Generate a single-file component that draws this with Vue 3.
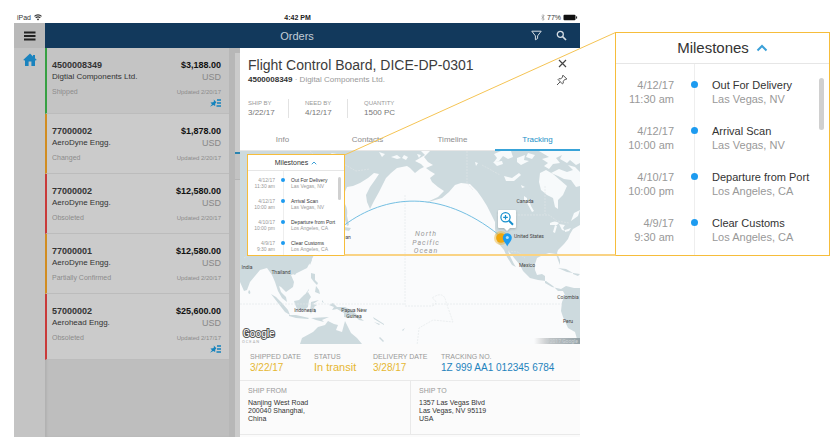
<script setup>
const orders = [
  { id: '4500008349', vendor: 'Digtial Components Ltd.', price: '$3,188.00', status: 'Shipped', updated: '2/20/17', tone: 'green', pinned: true, current: true },
  { id: '77000002', vendor: 'AeroDyne Engg.', price: '$1,878.00', status: 'Changed', updated: '2/20/17', tone: 'amber' },
  { id: '77000002', vendor: 'AeroDyne Engg.', price: '$12,580.00', status: 'Obsoleted', updated: '2/20/17', tone: 'red' },
  { id: '77000001', vendor: 'AeroDyne Engg.', price: '$12,580.00', status: 'Partially Confirmed', updated: '2/20/17', tone: 'amber' },
  { id: '57000002', vendor: 'Aerohead Engg.', price: '$25,600.00', status: 'Obsoleted', updated: '2/17/17', tone: 'red', pinned: true },
]
const facts = [
  { label: 'SHIP BY', value: '3/22/17' },
  { label: 'NEED BY', value: '4/12/17' },
  { label: 'QUANTITY', value: '1500 PC' },
]
const tabs = ['Info', 'Contacts', 'Timeline', 'Tracking']
const milestones = [
  { date: '4/12/17', time: '11:30 am', name: 'Out For Delivery', place: 'Las Vegas, NV' },
  { date: '4/12/17', time: '10:00 am', name: 'Arrival Scan', place: 'Las Vegas, NV' },
  { date: '4/10/17', time: '10:00 pm', name: 'Departure from Port', place: 'Los Angeles, CA' },
  { date: '4/9/17', time: '9:30 am', name: 'Clear Customs', place: 'Los Angeles, CA' },
]
</script>

<template>
  <main class="page">
    <section class="device">
      <div class="statusbar">
        <span class="carrier">iPad
          <svg width="8" height="7" viewBox="0 0 8 7"><path d="M4 6.6 2.8 5.2a1.7 1.7 0 0 1 2.4 0z" fill="#333" /><path d="M.5 2.4a5 5 0 0 1 7 0M1.7 3.9a3.3 3.3 0 0 1 4.6 0" fill="none" stroke="#333" stroke-width="1.2" /></svg>
        </span>
        <b>4:42 PM</b>
        <span class="power">
          <svg width="4" height="7" viewBox="0 0 4 7"><path d="M.4 2 3.3 4.9 2 6.4V.6L3.3 2 .4 4.9" fill="none" stroke="#888" stroke-width=".6" /></svg>
          77%
          <svg width="15" height="7" viewBox="0 0 15 7"><rect x=".5" y=".8" width="12" height="5.4" rx="1" fill="#111" /><path d="M13.6 2.4v2.2" stroke="#111" stroke-width="1" /></svg>
        </span>
      </div>

      <header class="topbar">
        <button class="menu" aria-label="Menu">
          <svg width="12" height="10" viewBox="0 0 12 10"><path d="M0 1.5h11.5M0 5h11.5M0 8.5h11.5" stroke="#222" stroke-width="1.8" /></svg>
        </button>
        <h1>Orders</h1>
        <div class="tools">
          <button aria-label="Filter"><svg width="11" height="11" viewBox="0 0 11 11"><path d="M.8 1.2h9.4L6.6 5.9v2.6L4.4 9.8V5.9z" fill="none" stroke="#d5dde4" stroke-width="1" stroke-linejoin="round" /></svg></button>
          <button aria-label="Search"><svg width="11" height="11" viewBox="0 0 11 11"><circle cx="4.300" cy="4.300" r="3" fill="none" stroke="#d5dde4" stroke-width="1.3" /><path d="m6.500 6.500 3.500 3.500" stroke="#d5dde4" stroke-width="1.7" /></svg></button>
        </div>
      </header>

      <div class="body">
        <nav class="rail">
          <a href="#home" aria-label="Home">
            <svg width="14" height="14" viewBox="0 0 14 14"><path d="M7 .6 10 3.400V2h2v3.300l1.600 1.500-.8.9-.8-.7v6H8.400V8.600H5.600V13H2V7l-.8.7-.8-.9z" fill="#1a83be" /></svg>
          </a>
        </nav>

        <ul class="orders">
          <li v-for="(o, i) in orders" :key="i" :class="['order', o.tone, { current: o.current }]">
            <div class="left">
              <strong>{{ o.id }}</strong>
              <span class="vendor">{{ o.vendor }}</span>
              <span class="state">{{ o.status }}</span>
            </div>
            <div class="right">
              <b>{{ o.price }}</b>
              <span class="currency">USD</span>
              <span class="updated">Updated {{ o.updated }}</span>
              <svg v-if="o.pinned" width="11" height="8" viewBox="0 0 11 8"><path d="M0 7.800 2 5.300.5 3.600 3.200 3.200 4 2.200 3.700.6 6.400 3.200 5.300 4.400 5.100 6.900 3.300 5.900z" fill="#1483bd" /><path d="M7 1H11M7 4H11M6.500 7H11" stroke="#1483bd" stroke-width="1.300" /></svg>
            </div>
          </li>
        </ul>

        <div class="gutter"></div>
        <div class="peek"><i></i></div>

        <article class="detail">
          <div class="heading">
            <div>
              <h2>Flight Control Board, DICE-DP-0301</h2>
              <p class="sub"><b>4500008349</b> · Digital Components Ltd.</p>
              <dl class="facts">
                <div v-for="f in facts" :key="f.label"><dt>{{ f.label }}</dt><dd>{{ f.value }}</dd></div>
              </dl>
            </div>
            <div class="actions">
              <button aria-label="Close"><svg width="9" height="9" viewBox="0 0 9 9"><path d="m1 1 7 7M8 1 1 8" stroke="#444" stroke-width="1.200" /></svg></button>
              <button aria-label="Pin"><svg width="12" height="12" viewBox="0 0 12 12"><path d="M7 1.200 10.800 5 9.800 5.500 9 5.200 7.300 7.300 7.200 9.300 6.400 9.900 2.100 5.600 2.800 4.800 4.800 4.700 6.800 3 6.400 2zM4.200 7.800 1 11" fill="none" stroke="#555" stroke-width="1" stroke-linejoin="round" /></svg></button>
            </div>
          </div>

          <div class="tabs" role="tablist">
            <button v-for="t in tabs" :key="t" role="tab" :aria-selected="t === 'Tracking'" :class="{ active: t === 'Tracking' }">{{ t }}</button>
          </div>

          <div class="map">
            <svg class="world" viewBox="240 151 340 193" preserveAspectRatio="xMinYMid slice">
              <defs>
                <linearGradient id="credit" x1="0" x2="1"><stop offset="0" stop-color="#aaa" stop-opacity="0" /><stop offset=".35" stop-color="#aab0b3" stop-opacity=".75" /><stop offset="1" stop-color="#93a1a7" /></linearGradient>
              </defs>
              <g class="land">
                <path d="M240 151H421L425 155 420 158 415 161 421 164 424 167 420 169 415 173 410 168 407 166 402 167 397 168 391 173 386 178 383 184 379 192 374 201 370 209 367 202 366 195 370 187 375 180 379 174 374 173 368 178 360 183 353 186 347 187 344 194 345 205 342 215 330 225 318 240 313 257 307 268 297 273 291 275 294 282 293 287 286 292 281 287 279 286 281 292 286 297 287 302 282 298 278 291 275 282 272 275 267 268 260 270 255 276 250 282 247 290 244 291 240 282z" />
                <path d="M345 204q3 5 2 12l2 9-2 1-2-6zM344 227l7 1-2 3-5-1z" />
                <path d="M249 290q2 1 1 4-3 0-1-4zM293 271l4 1-2 3-2-1zM311 258l1 2-2 5-1-2zM311 273l4 1 0 6 3 3-1 2-3-3-3-4zM316 286l3 4 1 4-5-2zM309 290l-4 5 1-2 3-4zM271 294l5 3 6 6 6 7 2 5-5-3-7-9zM289 315l7 0 13 3-1 1-12-1-7-2zM294 301l5-1 5-5 4-3 3 5-2 3-1 7-5 4-6-2-2-5zM311 302l8-2-6 4 4 1-3 2 2 6-2-1-1-5-2 7-1-3 1-7zM311 318l18-1-7 3 2 2-8-2zM322 300l2 3-2-1zM329 305l4-2 4 4 8 0 8 4 5 5 6 5-5-1-5-5-5 3-5-1 0-4-7-4-5 1 2-3zM361 308l4 3-4-2zM373 317l11 7 0 1-10-6z" />
                <path d="M300 344 302 338 313 332 318 327 325 325 328 321 334 324 338 325 336 330 342 332 345 321 348 327 351 333 357 338 362 344z" />
                <path d="M380 337l4 4-1 1-4-4zM402 330l3-2-2 3zM374 322l6 2-1 1z" />
                <path d="M424 157 430 151H580V225L573 229 570 234 568 239 564 244 558 250 557 253 560 260 560 265 558 260 556 254 549 253 543 255 537 258 535 264 535 270 537 275 542 274 545 276 545 283 552 287 561 289 566 286 574 288 580 288V344L577 339 575 332 568 328 563 317 561 311 562 302 565 295 563 291 558 291 553 286 546 281 538 280 530 278 523 271 520 265 515 259 511 254 508 251 511 258 514 264 516 267 512 265 507 257 504 250 498 243 496 238 495 228 495 222 491 214 487 206 482 198 477 191 470 184 461 183 455 185 449 192 442 198 425 203 438 197 444 191 438 187 432 182 430 178 435 174 430 171 426 168 433 165 428 162z" />
                <path d="M487 205l4 5 4 7-2-1zM485 196l3 5 0 3-3-4zM558 268l8 1 7 4-6-1zM573 273l7 1-2 2-5-2z" />
              </g>
              <g class="water">
                <path d="M540 173 546 170 553 174 560 180 567 186 563 195 558 200 558 209 555 207 553 198 547 195 541 190 539 182z" />
                <path d="M501 151l10 0 2 6-5 2-5-3-4 5-5 1 3-4-3-4zM493 162l9-1 1 3-6 2zM517 158l8-3-1 5 5 1-8 4-4-3zM504 176l8 2 7-5 2 2-7 6-8 0zM528 153l7 2-3 4-6-2zM539 151l41 0 0 12-4 2-6-5-3 3-7-4 2-4-6 3 4 5-7 1-4 5-5-3 4-3-6-4 7-2z" />
                <path d="M551 173l8-4 8 3 6-2-5-5 7 2 5 5 0 14-4 1-5-7-7-1-6-3zM529 200l2 6 3 5-2 1-5-9zM524 196l3 2 0 4-3-2zM521 185l4 2-3 1z" />
                <path d="M550 223q5-3 9 0l-2 2-7 0zM555 225l2 1-2 7-2-1zM559 224l6 1-2 3 2 3-3-1zM565 230l6-2-2 3-4 1zM574 213l6-3-2 6-7 5z" />
                <path d="M404 155l4 2-2 3-4-2zM417 154l4 1-2 3zM475 162l1 4 2-3zM331 153l12 2-3 4-6-1zM379 152l3 5 3-3zM391 157l6-2 4 3-4 1z" />
              </g>
              <path class="border" d="M467 151v32l6 7M497 215h52l8 6 12 2M508 251l10 1 7 6M310 151l8 8 22 3 16 9 14-2M244 258l14-9M405 195v111h27q8-3 0-8 12-8 14 4l7 20-20-2-14 8-2 18M240 304h165M432 304h130M545 186l0 28M482 165l18 10" />
              <path class="route" d="M344.500 225C385 195 440 188 499 235" />
              <g class="ocean"><text x="426" y="236">North</text><text x="426" y="245">Pacific</text><text x="426" y="253">Ocean</text></g>
              <g class="places">
                <text x="525" y="203">Canada</text><text x="529" y="238">United States</text><text x="527" y="267">Mexico</text><text x="568" y="299">Colombia</text><text x="568" y="323">Peru</text>
                <text x="247" y="269">India</text><text x="281" y="274">Thailand</text><text x="305" y="312">Indonesia</text><text x="354" y="312">Papua New</text><text x="354" y="318">Guinea</text><text x="344" y="239">Japan</text>
              </g>
              <circle cx="501" cy="238" r="7" fill="#efb229" opacity=".45" /><circle cx="501" cy="238" r="4.800" fill="#f0a70c" />
              <path d="M507.300 246.500c-1-3-4.500-5.500-4.500-8.800a4.500 4.500 0 0 1 9 0c0 3.300-3.500 5.800-4.500 8.800z" fill="#1b9cf0" /><circle cx="507.300" cy="237.600" r="1.500" fill="#b6dff5" />
              <path class="tip" d="M499 210h16q1 0 1 1v16q0 1-1 1h-5l-3 3-3-3h-5q-1 0-1-1v-16q0-1 1-1z" />
              <circle cx="505.500" cy="217.300" r="4.600" fill="#fff" stroke="#168fcd" stroke-width="1.200" /><path d="M505.500 215v4.600M503.200 217.300h4.600" stroke="#168fcd" stroke-width="1.200" /><path d="m509 220.700 4 4" stroke="#168fcd" stroke-width="2" />
              <text class="fragment" x="242" y="343">OCEAN</text>
              <text class="google" x="243" y="337">Google</text>
              <rect x="534" y="338" width="46" height="6" fill="url(#credit)" />
              <text class="copyright" x="578" y="343">©2017 Google</text>
            </svg>
            <section class="milestones small">
              <h3>Milestones <svg viewBox="0 0 12 8"><path d="m1.500 6.500 4.500-4.500 4.500 4.500" /></svg></h3>
              <ol>
                <li v-for="m in milestones" :key="m.name">
                  <span class="when">{{ m.date }}<br>{{ m.time }}</span><i class="dot"></i>
                  <span class="what"><b>{{ m.name }}</b><br>{{ m.place }}</span>
                </li>
              </ol>
              <i class="thumb"></i>
            </section>
          </div>

          <dl class="shipment">
            <div><dt>SHIPPED DATE</dt><dd>3/22/17</dd></div>
            <div><dt>STATUS</dt><dd class="transit">In transit</dd></div>
            <div><dt>DELIVERY DATE</dt><dd>3/28/17</dd></div>
            <div><dt>TRACKING NO.</dt><dd><a href="#tracking">1Z 999 AA1 012345 6784</a></dd></div>
          </dl>
          <div class="addresses">
            <section><h4>SHIP FROM</h4><address>Nanjing West Road<br>200040 Shanghai,<br>China</address></section>
            <section><h4>SHIP TO</h4><address>1357 Las Vegas Blvd<br>Las Vegas, NV 95119<br>USA</address></section>
          </div>
        </article>
      </div>
    </section>

    <aside class="callout">
      <section class="milestones large">
        <h3>Milestones <svg viewBox="0 0 12 8"><path d="m1.500 6.500 4.500-4.500 4.500 4.500" /></svg></h3>
        <ol>
          <li v-for="m in milestones" :key="m.name">
            <span class="when">{{ m.date }}<br>{{ m.time }}</span><i class="dot"></i>
            <span class="what"><b>{{ m.name }}</b><br>{{ m.place }}</span>
          </li>
        </ol>
        <i class="thumb"></i>
      </section>
    </aside>

    <svg class="connector" viewBox="0 0 840 445" preserveAspectRatio="none"><path d="M344.500 155 615.500 32.500" /><path class="base" d="M344.500 255H615.500" /></svg>
  </main>
</template>

<style>
body { margin: 0; background: #fff; }
</style>

<style scoped>
* { box-sizing: border-box; margin: 0; padding: 0; }
button { border: 0; background: none; font: inherit; color: inherit; cursor: pointer; }
svg { display: block; flex: none; }
a { text-decoration: none; color: inherit; }
ul, ol { list-style: none; }
.page { position: relative; display: flex; gap: 35px; align-items: flex-start; padding: 14px 10px 8px 14px; font-family: "Liberation Sans", Arial, sans-serif; color: #444; }
.device { flex: 566 1 0; min-width: 0; }
.callout { flex: 215 1 0; min-width: 0; padding-top: 18px; }

.statusbar { display: grid; grid-template-columns: 1fr auto 1fr; height: 9px; padding: 0 2px 0 3px; font-size: 7px; line-height: 8px; color: #333; }
.statusbar b { color: #222; }
.carrier, .power { display: flex; gap: 3px; }
.power { justify-content: flex-end; gap: 2px; }

.topbar { display: grid; grid-template-columns: 1fr auto 1fr; align-items: center; height: 25px; background: #12395c; }
.menu { display: grid; place-items: center; width: 31px; height: 25px; background: #b9b9b9; }
.topbar h1 { font-size: 11px; font-weight: 400; line-height: 14px; color: #c3cdd6; }
.tools { display: flex; justify-content: flex-end; gap: 14px; padding-right: 13px; }

.body { display: grid; grid-template-columns: 31px minmax(0, 184fr) 6px 5px minmax(0, 340fr); background: #bebebe; }
.rail { display: flex; justify-content: center; padding-top: 5px; background: #c4c4c4; }
.rail a { height: 14px; }
.orders { box-shadow: inset 2px 0 2px #b2b2b2; }
.order { display: flex; justify-content: space-between; min-height: 60px; padding: 11px 8px 6px 5px; border-left: 2px solid; border-bottom: 1px solid #bcbcbc; background: #cbcbcb; }
.order.current { background: #c4c4c4; }
.green { border-left-color: #37a043; }
.amber { border-left-color: #d18d21; }
.red { border-left-color: #c93a3a; }
.left, .right { display: flex; flex-direction: column; font-size: 9px; line-height: 12px; }
.right { align-items: flex-end; }
.left strong { color: #333; }
.right b { color: #111; }
.vendor { font-size: 8px; color: #333; }
.currency { color: #888; }
.state, .updated { margin-top: 4px; font-size: 7px; line-height: 10px; color: #8c8c8c; }
.updated { font-size: 6px; }
.right svg { margin-top: 2px; }
.gutter { background: #b7b7b7; }
.peek { padding-top: 99px; background: #cbcbcb; border-top: 5px solid #b7b7b7; }
.peek i { display: block; height: 28px; border-top: 2px solid #2b84b0; border-bottom: 1px solid #b5b5b5; background: #c3c3c3; }

.detail { background: #fbfbfb; padding-bottom: 2px; }
.heading { display: flex; justify-content: space-between; height: 82px; padding: 8px 12px 0 8px; background: #fff; }
h2 { font-size: 14px; font-weight: 400; line-height: 18px; color: #3c3c3c; white-space: nowrap; }
.sub { font-size: 8px; line-height: 12px; color: #999; }
.sub b { color: #333; }
.facts { display: grid; grid-template-columns: 41px 59px auto; margin-top: 13px; }
.facts div { height: 19px; border-right: 1px solid #e2e2e2; }
.facts div:last-child { border: 0; }
.facts div + div { padding-left: 16px; }
dt { color: #999; }
.facts dt { font-size: 6px; line-height: 8px; }
.facts dd { font-size: 8px; line-height: 11px; color: #777; }
.actions { display: flex; flex-direction: column; align-items: center; gap: 6px; padding-top: 3px; }
.tabs { display: grid; grid-template-columns: repeat(4, 1fr); height: 21px; background: #fff; }
.tabs button { border-bottom: 1px solid #e6e6e6; font-size: 8px; line-height: 18px; color: #8e8e8e; }
.tabs .active { border-bottom: 2px solid #38a3d8; color: #2190c8; }

.map { position: relative; }
.world { width: 100%; height: auto; background: #fafbfc; }
.land { fill: #cddade; }
.water { fill: #f7fafb; }
.border { fill: none; stroke: #e1e6e8; stroke-width: 1; stroke-dasharray: 2 1; opacity: .6; }
.route { fill: none; stroke: #74bfe2; stroke-width: 1; }
.world text { font-family: Roboto, sans-serif; }
.places { font-size: 5px; text-anchor: middle; fill: #444; }
.ocean { font-size: 7px; font-style: italic; letter-spacing: 1px; text-anchor: middle; fill: #999; }
.google { font-size: 10px; fill: #fff; stroke: #555; stroke-width: 2px; paint-order: stroke; }
.world .fragment { font-size: 4px; letter-spacing: 1px; fill: #aaa; }
.copyright { font-size: 5px; text-anchor: end; fill: #ccd3d6; }
.tip { fill: #fff; filter: drop-shadow(0 1px 1px #0003); }

.milestones { position: relative; border: 1px solid #f6bd3b; background: #fff; overflow: hidden; }
.milestones h3 { display: flex; align-items: center; justify-content: center; font-weight: 400; color: #333; border-bottom: 1px solid #e6e6e6; }
.milestones h3 path { fill: none; stroke: #3ba0d8; stroke-width: 2px; }
.milestones li { position: relative; display: grid; }
.milestones li::before { content: ""; position: absolute; top: 0; bottom: 0; width: 1px; background: #eee; }
.when { text-align: right; color: #999; }
.what { color: #999; white-space: nowrap; }
.what b { font-weight: 400; color: #333; }
.dot { position: relative; justify-self: center; border-radius: 50%; background: #1d9bf0; }
.thumb { position: absolute; background: #d0d0d0; border-radius: 3px; }

.small { position: absolute; left: 7px; top: 3px; width: 98px; height: 102px; }
.small h3 { gap: 3px; height: 16px; font-size: 7px; line-height: 14px; }
.small h3 svg { width: 6px; height: 4px; }
.small li { grid-template-columns: 27px 16px auto; height: 21px; padding-top: 6px; font-size: 5px; line-height: 6px; }
.small li::before { left: 35px; }
.small .dot { width: 4px; height: 4px; margin-top: 1px; }
.small .thumb { right: 3px; top: 22px; width: 3px; height: 23px; }

.large { height: 224px; }
.large h3 { gap: 7px; height: 31px; font-size: 15px; line-height: 30px; }
.large h3 svg { width: 12px; height: 8px; }
.large li { grid-template-columns: 60px 36px auto; height: 46px; padding-top: 14px; font-size: 11px; line-height: 14px; }
.large li:last-child { height: 54px; }
.large .when { padding-right: 2px; }
.large li::before { left: 78px; }
.large .dot { width: 7px; height: 7px; margin-top: 3px; }
.large .thumb { right: 5px; top: 45px; width: 5px; height: 52px; }

.shipment { display: grid; grid-template-columns: 64px 59px 68px auto; height: 37px; padding: 9px 0 0 10px; border-bottom: 1px solid #e9e9e9; }
.shipment dt, h4 { font-size: 7px; font-weight: 400; line-height: 8px; color: #999; white-space: nowrap; }
.shipment dd { font-size: 10px; line-height: 13px; color: #e6b732; white-space: nowrap; }
.shipment .transit { font-size: 11px; }
.shipment a { color: #1f83bd; }
.addresses { display: grid; grid-template-columns: 1fr 1fr; border-bottom: 1px solid #e9e9e9; }
.addresses section { min-height: 53px; padding: 6px 8px; }
.addresses section + section { border-left: 1px solid #e9e9e9; }
address { margin-top: 4px; font-size: 7px; font-style: normal; line-height: 8px; color: #333; }

.connector { position: absolute; left: 0; top: 0; width: 100%; height: 445px; pointer-events: none; }
.connector path { fill: none; stroke: #f5c454; stroke-width: 1px; vector-effect: non-scaling-stroke; }
.connector .base { stroke: #f9d384; stroke-width: 2px; }
</style>
